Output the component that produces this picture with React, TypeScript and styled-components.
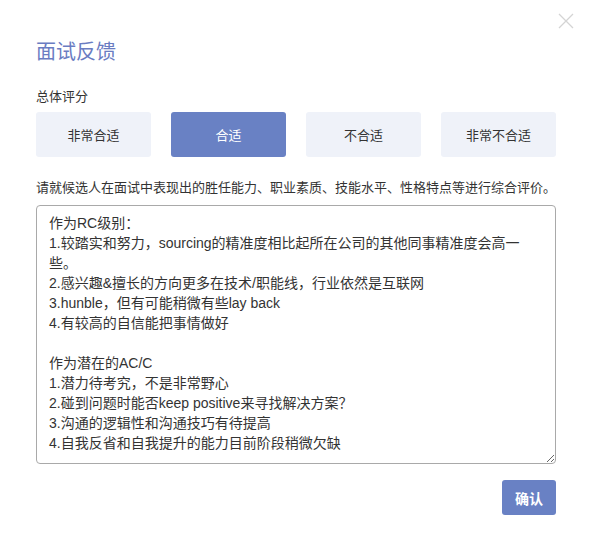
import React, { useState } from "react";
import styled, { createGlobalStyle } from "styled-components";

const GlobalStyle = createGlobalStyle`
  html, body {
    margin: 0;
    padding: 0;
    background: #ffffff;
  }
  body {
    font-family: "Liberation Sans", "Noto Sans CJK SC", sans-serif;
    color: #333333;
  }
`;

const OPTIONS = ["非常合适", "合适", "不合适", "非常不合适"];

const FEEDBACK = `作为RC级别：
1.较踏实和努力，sourcing的精准度相比起所在公司的其他同事精准度会高一
些。
2.感兴趣&擅长的方向更多在技术/职能线，行业依然是互联网
3.hunble，但有可能稍微有些lay back
4.有较高的自信能把事情做好

作为潜在的AC/C
1.潜力待考究，不是非常野心
2.碰到问题时能否keep positive来寻找解决方案？
3.沟通的逻辑性和沟通技巧有待提高
4.自我反省和自我提升的能力目前阶段稍微欠缺`;

const App = () => {
  const [rating, setRating] = useState(1);
  const [text, setText] = useState(FEEDBACK);

  return (
    <>
      <GlobalStyle />
      <Dialog>
        <CloseButton aria-label="close">
          <svg width="16" height="16" viewBox="0 0 16 16">
            <path
              d="M1 1L15 15M15 1L1 15"
              stroke="#d4d4d4"
              strokeWidth="1.3"
              fill="none"
            />
          </svg>
        </CloseButton>
        <Title>面试反馈</Title>
        <Label>总体评分</Label>
        <Options>
          {OPTIONS.map((opt, i) => (
            <Option
              key={opt}
              $selected={rating === i}
              onClick={() => setRating(i)}
            >
              {opt}
            </Option>
          ))}
        </Options>
        <Hint>
          请就候选人在面试中表现出的胜任能力、职业素质、技能水平、性格特点等进行综合评价。
        </Hint>
        <Feedback value={text} onChange={(e) => setText(e.target.value)} />
        <Footer>
          <Confirm>确认</Confirm>
        </Footer>
      </Dialog>
    </>
  );
};

export default App;

const Dialog = styled.div`
  position: relative;
  width: 592px;
  height: 551px;
  box-sizing: border-box;
  padding: 0 36px;
  display: flex;
  flex-direction: column;
  background: #ffffff;
`;

const CloseButton = styled.button`
  position: absolute;
  top: 13px;
  right: 18px;
  width: 16px;
  height: 16px;
  padding: 0;
  border: none;
  background: transparent;
  display: flex;
  cursor: pointer;
`;

const Title = styled.h2`
  margin: 39px 0 0;
  font-size: 20px;
  line-height: 26px;
  font-weight: normal;
  color: #6a7cc2;
`;

const Label = styled.div`
  margin-top: 22px;
  font-size: 13px;
  line-height: 20px;
  color: #333333;
`;

const Options = styled.div`
  margin-top: 5px;
  display: grid;
  grid-template-columns: repeat(4, 115px);
  column-gap: 20px;
`;

const Option = styled.button<{ $selected: boolean }>`
  height: 45px;
  border: none;
  border-radius: 3px;
  font-family: inherit;
  font-size: 13px;
  cursor: pointer;
  background: ${({ $selected }) => ($selected ? "#6981c4" : "#eff2f9")};
  color: ${({ $selected }) => ($selected ? "#ffffff" : "#333333")};
`;

const Hint = styled.div`
  margin-top: 21px;
  font-size: 13px;
  line-height: 20px;
  color: #333333;
  white-space: nowrap;
`;

const Feedback = styled.textarea`
  margin-top: 7px;
  height: 259px;
  box-sizing: border-box;
  padding: 7px 12px;
  border: 1px solid #a9a9a9;
  border-radius: 4px;
  font-family: inherit;
  font-size: 14px;
  line-height: 20px;
  color: #333333;
  outline: none;
  resize: vertical;
`;

const Footer = styled.div`
  margin-top: 16px;
  display: flex;
  justify-content: flex-end;
`;

const Confirm = styled.button`
  width: 54px;
  height: 35px;
  border: none;
  border-radius: 3px;
  background: #6981c4;
  color: #ffffff;
  font-family: inherit;
  font-size: 14px;
  font-weight: bold;
  cursor: pointer;
`;
